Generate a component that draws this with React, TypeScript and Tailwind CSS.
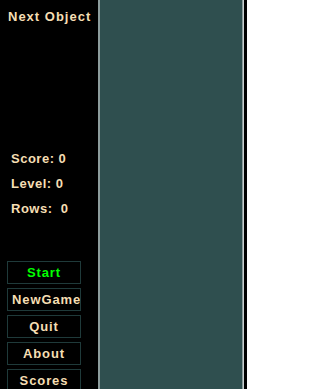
import React from 'react'

const buttons = [
  { label: 'Start', color: 'text-[#00ff00]' },
  { label: 'NewGame', color: 'text-[#f5deb3]' },
  { label: 'Quit', color: 'text-[#f5deb3]' },
  { label: 'About', color: 'text-[#f5deb3]' },
  { label: 'Scores', color: 'text-[#f5deb3]' },
]

export default function App() {
  return (
    <div className="flex h-[389px] w-[247px] overflow-hidden bg-black font-['Liberation_Sans',Arial,sans-serif] font-bold">
      {/* Side panel */}
      <div className="flex w-[98px] shrink-0 flex-col text-[#f5deb3]">
        <div className="mt-[9px] pl-[8px] text-[13px] leading-[16px] tracking-[1px] whitespace-nowrap">
          Next Object
        </div>

        <div className="mt-[126px] flex flex-col gap-[9px] pl-[11px] text-[13px] leading-[16px] tracking-[0.5px]">
          <span className="whitespace-pre">Score: 0</span>
          <span className="whitespace-pre">Level: 0</span>
          <span className="whitespace-pre">Rows:  0</span>
        </div>

        <div className="mt-[44px] flex flex-col gap-[4px] pl-[7px]">
          {buttons.map((b) => (
            <div
              key={b.label}
              className={`flex h-[23px] w-[74px] shrink-0 items-center justify-center-safe overflow-hidden border border-[#1f3a3a] px-[4px] text-[13px] tracking-[0.9px] whitespace-nowrap ${b.color}`}
            >
              {b.label}
            </div>
          ))}
        </div>
      </div>

      {/* Board */}
      <div className="w-[2px] shrink-0 bg-[#8c9c9c]" />
      <div className="flex-1 bg-[#2f4f4f]" />
      <div className="w-[1px] shrink-0 bg-[#8c9c9c]" />
      <div className="w-[1px] shrink-0 bg-[#c8d0d0]" />
      <div className="w-[3px] shrink-0 bg-black" />
    </div>
  )
}
